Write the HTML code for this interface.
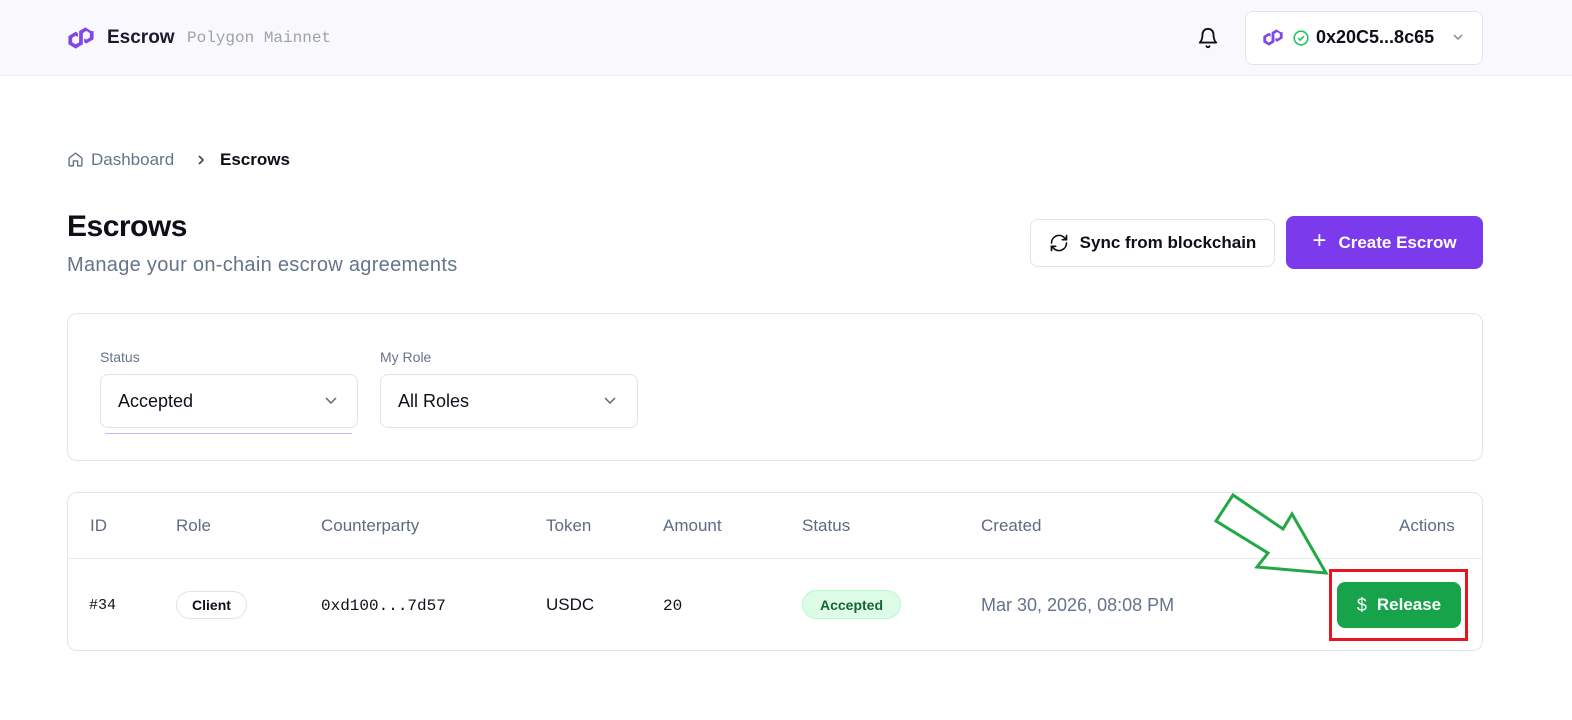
<!DOCTYPE html>
<html><head><meta charset="utf-8"><style>
*{box-sizing:border-box;margin:0;padding:0}
body{width:1572px;height:720px;background:#fff;font-family:"Liberation Sans",sans-serif;color:#0f0f1a;position:relative;overflow:hidden}
.abs{position:absolute}
.hdr{left:0;top:0;width:1572px;height:76px;background:#f8f8fd;border-bottom:1px solid #ececf3}
.mono{font-family:"Liberation Mono",monospace}
.btn{border-radius:8px;display:flex;align-items:center;justify-content:center;font-weight:bold;font-size:17px}
.card{border:1px solid #e4e4ec;border-radius:10px;background:#fff}
.sel{border:1px solid #e2e2ea;border-radius:8px;height:54px;width:258px;font-size:18px;padding-left:17px;display:flex;align-items:center}
.th{top:516px;font-size:17px;color:#5f6b82}
.td{top:595px;font-size:17px}
</style></head><body>
<div class="abs hdr"></div>
<svg class="abs" style="left:68px;top:27px" width="26" height="22" viewBox="3.2 2.7 12.6 10.1" preserveAspectRatio="none"><path d="M14.5 4.6L11.6 2.9 8.6 4.6V9.7L6.9 10.7 5.2 9.7V7.7L6.9 6.7 8 7.3V5.5L6.9 4.9 3.4 6.9V10.6L6.9 12.6 10.4 10.6V5.5L12.1 4.5 13.8 5.5V7.5L12.1 8.5 11 7.9V9.7L12.1 10.3 15.6 8.3V4.6Z" fill="#8247e5"/></svg>
<div class="abs" style="left:107px;top:27px;font-size:19px;font-weight:bold;color:#1a1a2e">Escrow</div>
<div class="abs mono" style="left:187px;top:29px;font-size:16px;color:#9ca3af">Polygon Mainnet</div>
<svg class="abs" style="left:1197px;top:27px" width="22" height="22" viewBox="0 0 24 24" fill="none" stroke="#111" stroke-width="2" stroke-linecap="round" stroke-linejoin="round"><path d="M6 8a6 6 0 0 1 12 0c0 7 3 9 3 9H3s3-2 3-9"/><path d="M10.3 21a1.94 1.94 0 0 0 3.4 0"/></svg>
<div class="abs" style="left:1245px;top:11px;width:238px;height:54px;border:1px solid #e4e4ec;border-radius:8px;background:#fff"></div>
<svg class="abs" style="left:1263px;top:29px" width="20" height="17" viewBox="3.2 2.7 12.6 10.1" preserveAspectRatio="none"><path d="M14.5 4.6L11.6 2.9 8.6 4.6V9.7L6.9 10.7 5.2 9.7V7.7L6.9 6.7 8 7.3V5.5L6.9 4.9 3.4 6.9V10.6L6.9 12.6 10.4 10.6V5.5L12.1 4.5 13.8 5.5V7.5L12.1 8.5 11 7.9V9.7L12.1 10.3 15.6 8.3V4.6Z" fill="#8247e5"/></svg>
<svg class="abs" style="left:1293px;top:30px" width="16" height="16" viewBox="0 0 16 16"><circle cx="8" cy="8" r="6.8" fill="none" stroke="#22c55e" stroke-width="1.6"/><path d="M5.2 8.2l2 1.9 3.6-3.8" fill="none" stroke="#22c55e" stroke-width="1.6"/></svg>
<div class="abs" style="left:1316px;top:27px;font-size:18px;font-weight:bold">0x20C5...8c65</div>
<svg class="abs" style="left:1452px;top:33px" width="12" height="8" viewBox="0 0 12 8"><path d="M2 2l4 4 4-4" fill="none" stroke="#888" stroke-width="1.5"/></svg>

<svg class="abs" style="left:67px;top:151px" width="17" height="17" viewBox="0 0 24 24" fill="none" stroke="#64748b" stroke-width="2" stroke-linejoin="round"><path d="M3 10l9-7 9 7v10a1 1 0 0 1-1 1h-5v-7h-6v7H4a1 1 0 0 1-1-1z"/></svg>
<div class="abs" style="left:91px;top:150px;font-size:17px;color:#64748b">Dashboard</div>
<svg class="abs" style="left:196px;top:154px" width="10" height="12" viewBox="0 0 10 12"><path d="M3 2l4 4-4 4" fill="none" stroke="#444" stroke-width="1.6"/></svg>
<div class="abs" style="left:220px;top:150px;font-size:17px;font-weight:bold">Escrows</div>

<div class="abs" style="left:67px;top:210px;font-size:30px;font-weight:bold;letter-spacing:-0.5px">Escrows</div>
<div class="abs" style="left:67px;top:254px;font-size:20px;color:#64748b;letter-spacing:0.3px">Manage your on-chain escrow agreements</div>

<div class="abs btn" style="left:1030px;top:219px;width:245px;height:48px;border:1px solid #e2e2ea;background:#fff;font-size:17px">
<svg width="20" height="20" viewBox="0 0 24 24" fill="none" stroke="#111" stroke-width="2" stroke-linecap="round" style="margin-right:11px"><path d="M3 12a9 9 0 0 1 15.5-6.3L21 8"/><path d="M21 3v5h-5"/><path d="M21 12a9 9 0 0 1-15.5 6.3L3 16"/><path d="M3 21v-5h5"/></svg>Sync from blockchain</div>
<div class="abs btn" style="left:1286px;top:216px;width:197px;height:53px;background:#7c3aed;color:#fff">
<span style="font-size:24px;font-weight:normal;margin-right:12px;margin-top:-3px">+</span>Create Escrow</div>

<div class="abs card" style="left:67px;top:313px;width:1416px;height:148px"></div>
<div class="abs" style="left:100px;top:349px;font-size:14px;color:#64748b">Status</div>
<div class="abs" style="left:380px;top:349px;font-size:14px;color:#64748b">My Role</div>
<div class="abs sel" style="left:100px;top:374px">Accepted</div>
<div class="abs sel" style="left:380px;top:374px">All Roles</div>
<svg class="abs" style="left:324px;top:396px" width="14" height="9" viewBox="0 0 14 9"><path d="M2 2l5 5 5-5" fill="none" stroke="#666" stroke-width="1.5"/></svg>
<svg class="abs" style="left:603px;top:396px" width="14" height="9" viewBox="0 0 14 9"><path d="M2 2l5 5 5-5" fill="none" stroke="#666" stroke-width="1.5"/></svg>
<div class="abs" style="left:105px;top:433px;width:247px;height:1px;background:#c4b5fd"></div>

<div class="abs card" style="left:67px;top:492px;width:1416px;height:159px"></div>
<div class="abs" style="left:68px;top:558px;width:1414px;height:1px;background:#e8e8ef"></div>
<div class="abs th" style="left:90px">ID</div>
<div class="abs th" style="left:176px">Role</div>
<div class="abs th" style="left:321px">Counterparty</div>
<div class="abs th" style="left:546px">Token</div>
<div class="abs th" style="left:663px">Amount</div>
<div class="abs th" style="left:802px">Status</div>
<div class="abs th" style="left:981px">Created</div>
<div class="abs th" style="left:1399px">Actions</div>
<div class="abs td mono" style="left:89px;font-size:15px;top:597px">#34</div>
<div class="abs" style="left:176px;top:591px;width:71px;height:28px;border:1px solid #e2e2ea;border-radius:14px;font-size:14px;font-weight:bold;display:flex;align-items:center;justify-content:center">Client</div>
<div class="abs td mono" style="left:321px;font-size:16px;top:597px">0xd100...7d57</div>
<div class="abs td" style="left:546px">USDC</div>
<div class="abs td mono" style="left:663px;font-size:16px;top:597px">20</div>
<div class="abs" style="left:802px;top:590px;width:99px;height:29px;background:#dcfce7;border:1px solid #bbf7d0;border-radius:15px;color:#166534;font-size:14px;font-weight:bold;display:flex;align-items:center;justify-content:center">Accepted</div>
<div class="abs td" style="left:981px;color:#64748b;font-size:18px">Mar 30, 2026, 08:08 PM</div>
<div class="abs btn" style="left:1337px;top:582px;width:124px;height:46px;background:#16a34a;color:#fff"><span style="font-weight:normal;margin-right:10px;font-size:18px">$</span>Release</div>
<div class="abs" style="left:1329px;top:569px;width:139px;height:72px;border:3px solid #e8141e"></div>
<svg class="abs" style="left:0;top:0" width="1572" height="720"><polygon points="1233,495 1216,521 1268,553 1257,567 1326,573 1292,514 1283,529" fill="none" stroke="#22a846" stroke-width="3" stroke-linejoin="miter"/></svg>
</body></html>
